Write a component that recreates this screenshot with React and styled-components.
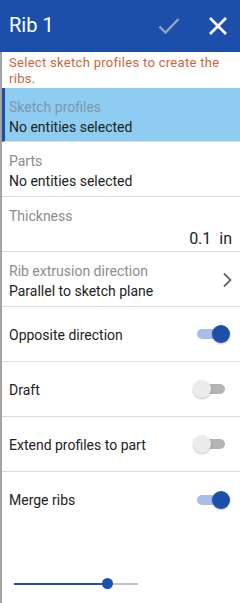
import styled, { createGlobalStyle } from "styled-components";

const GlobalStyle = createGlobalStyle`
  html, body { margin: 0; padding: 0; background: #fff; }
  body { font-family: Roboto, "Noto Sans", sans-serif; }
`;

const Panel = styled.div`
  width: 240px;
  height: 603px;
  display: flex;
  flex-direction: column;
  overflow: hidden;
`;

const Header = styled.div`
  height: 52px;
  flex: none;
  background: #1b4fab;
  display: flex;
  align-items: center;
  padding: 0 12px 0 9px;
  box-sizing: border-box;
`;

const Title = styled.h1`
  flex: 1;
  margin: 0;
  font-size: 20px;
  font-weight: 400;
  color: #fff;
  padding-bottom: 2px;
`;

const IconButton = styled.button`
  border: 0;
  background: none;
  padding: 0;
  margin-left: ${(p) => p.$gap || 0}px;
  display: flex;
`;

const Body = styled.div`
  flex: 1;
  display: flex;
  flex-direction: column;
  border-left: 2px solid #a3a3a3;
`;

const Message = styled.p`
  margin: 0;
  height: 36px;
  flex: none;
  box-sizing: border-box;
  padding: 3px 6px 0 7px;
  font-size: 13px;
  line-height: 16px;
  letter-spacing: 0.3px;
  color: #c9673d;
`;

const FieldRow = styled.div`
  height: ${(p) => p.$h || 55}px;
  flex: none;
  box-sizing: border-box;
  padding: 9px 8px 0 ${(p) => (p.$active ? 4 : 7)}px;
  background: ${(p) => (p.$active ? "#8ecdf1" : "#fff")};
  border-left: ${(p) => (p.$active ? "3px solid #1b4fab" : "0")};
  border-bottom: 1px solid #dddddd;
  display: flex;
  align-items: flex-start;
`;

const FieldText = styled.div`
  flex: 1;
  display: flex;
  flex-direction: column;
`;

const Label = styled.div`
  font-size: 14px;
  line-height: 20px;
  color: ${(p) => (p.$active ? "#7f96aa" : "#8c8c8c")};
`;

const Value = styled.div`
  font-size: 14px;
  line-height: 20px;
  color: #222;
`;

const Amount = styled.div`
  margin-top: 2px;
  font-size: 16px;
  line-height: 22px;
  color: #222;
  text-align: right;
  white-space: pre;
`;

const Chevron = styled.div`
  align-self: center;
  margin-top: -8px;
  display: flex;
`;

const ToggleRow = styled.div`
  height: 55px;
  flex: none;
  box-sizing: border-box;
  padding: 0 10px 0 7px;
  border-bottom: ${(p) => (p.$last ? "0" : "1px solid #dddddd")};
  display: flex;
  align-items: center;
  font-size: 14px;
  color: #222;
`;

const ToggleLabel = styled.span`
  flex: 1;
  padding-top: 1px;
`;

const Switch = styled.div`
  position: relative;
  width: 37px;
  height: 18px;
`;

const Track = styled.div`
  position: absolute;
  left: 4px;
  right: 5px;
  top: 4px;
  height: 10px;
  border-radius: 5px;
  background: ${(p) => (p.$on ? "#a6bfe8" : "#b4b4b4")};
`;

const Thumb = styled.div`
  position: absolute;
  top: 0;
  ${(p) => (p.$on ? "right: 0;" : "left: 0;")}
  width: 18px;
  height: 18px;
  border-radius: 50%;
  background: ${(p) => (p.$on ? "#1b4fab" : "#ececec")};
  box-shadow: 0 1px 2px rgba(0, 0, 0, 0.25);
`;

const SliderArea = styled.div`
  flex: 1;
  display: flex;
  align-items: flex-end;
  padding: 0 0 14px 12px;
`;

const Slider = styled.div`
  position: relative;
  width: 124px;
  height: 11px;
  display: flex;
  align-items: center;
`;

const SliderFill = styled.div`
  height: 2px;
  background: ${(p) => (p.$on ? "#1b4fab" : "#c2c2c2")};
`;

const SliderThumb = styled.div`
  position: absolute;
  top: 0;
  width: 11px;
  height: 11px;
  margin-left: -5.5px;
  border-radius: 50%;
  background: #1b4fab;
`;

const Toggle = ({ on }) => (
  <Switch>
    <Track $on={on} />
    <Thumb $on={on} />
  </Switch>
);

const App = () => {
  const slider = 0.75;
  return (
    <Panel>
      <GlobalStyle />
      <Header>
        <Title>Rib 1</Title>
        <IconButton>
          <svg width="22" height="18" viewBox="0 0 22 18">
            <path d="M1.5 9.5 L7.5 15.5 L20.5 2" fill="none" stroke="#93a3c2" strokeWidth="2.4" />
          </svg>
        </IconButton>
        <IconButton $gap={28}>
          <svg width="20" height="20" viewBox="0 0 20 20">
            <path d="M2 2 L18 18 M18 2 L2 18" fill="none" stroke="#fff" strokeWidth="2.6" />
          </svg>
        </IconButton>
      </Header>
      <Body>
        <Message>Select sketch profiles to create the ribs.</Message>
        <FieldRow $active $h={54}>
          <FieldText>
            <Label $active>Sketch profiles</Label>
            <Value>No entities selected</Value>
          </FieldText>
        </FieldRow>
        <FieldRow>
          <FieldText>
            <Label>Parts</Label>
            <Value>No entities selected</Value>
          </FieldText>
        </FieldRow>
        <FieldRow>
          <FieldText>
            <Label>Thickness</Label>
            <Amount>{"0.1  in"}</Amount>
          </FieldText>
        </FieldRow>
        <FieldRow>
          <FieldText>
            <Label>Rib extrusion direction</Label>
            <Value>Parallel to sketch plane</Value>
          </FieldText>
          <Chevron>
            <svg width="10" height="16" viewBox="0 0 10 16">
              <path d="M2 1.5 L8.5 8 L2 14.5" fill="none" stroke="#666" strokeWidth="1.8" />
            </svg>
          </Chevron>
        </FieldRow>
        <ToggleRow>
          <ToggleLabel>Opposite direction</ToggleLabel>
          <Toggle on />
        </ToggleRow>
        <ToggleRow>
          <ToggleLabel>Draft</ToggleLabel>
          <Toggle />
        </ToggleRow>
        <ToggleRow>
          <ToggleLabel>Extend profiles to part</ToggleLabel>
          <Toggle />
        </ToggleRow>
        <ToggleRow $last>
          <ToggleLabel>Merge ribs</ToggleLabel>
          <Toggle on />
        </ToggleRow>
        <SliderArea>
          <Slider>
            <SliderFill $on style={{ width: `${slider * 100}%` }} />
            <SliderFill style={{ flex: 1 }} />
            <SliderThumb style={{ left: `${slider * 100}%` }} />
          </Slider>
        </SliderArea>
      </Body>
    </Panel>
  );
};

export default App;
